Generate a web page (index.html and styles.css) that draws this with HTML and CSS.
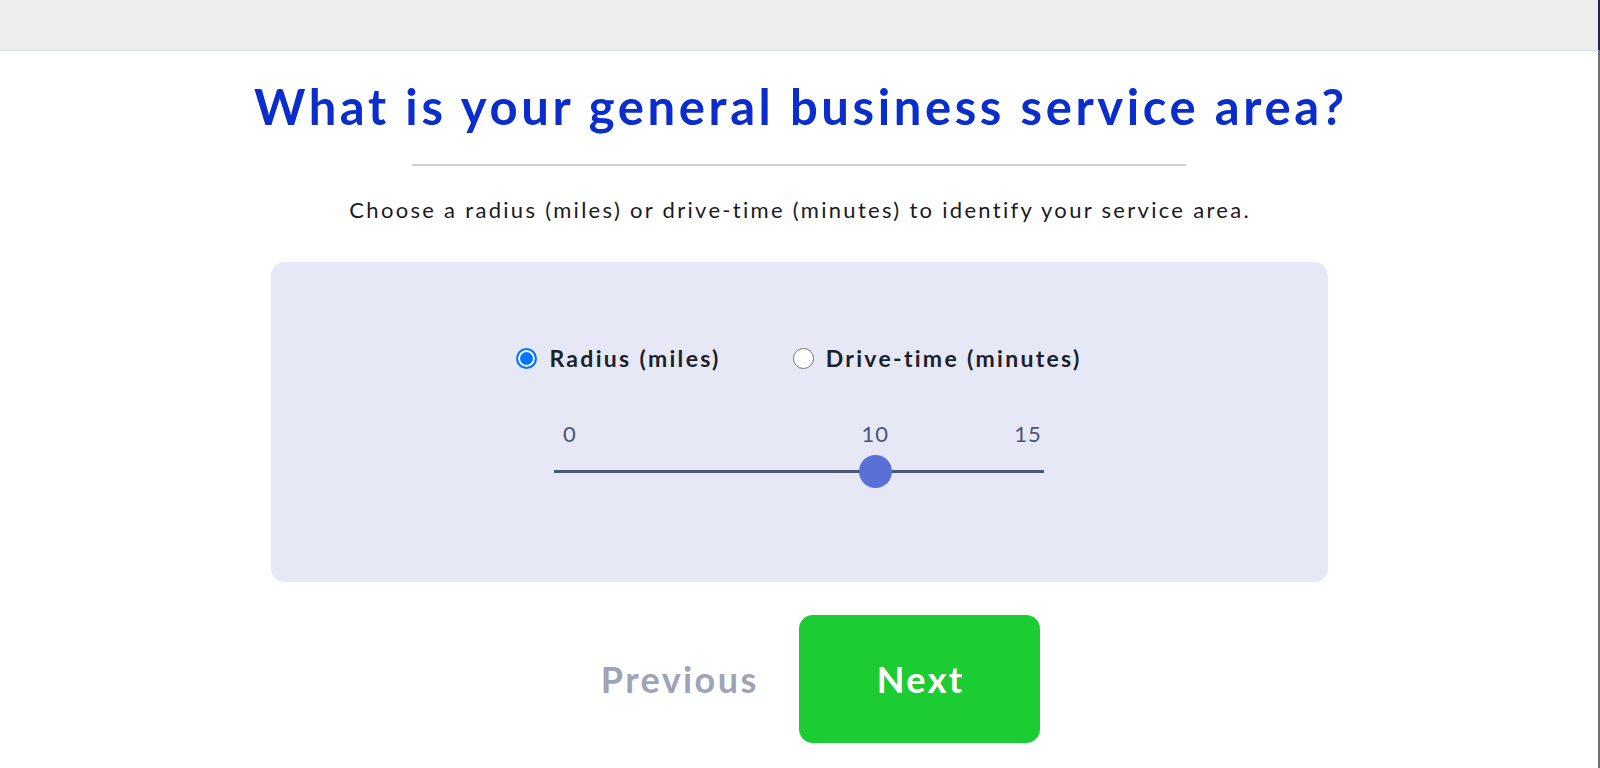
FILE: index.html
```html
<!DOCTYPE html>
<html lang="en">
<head>
    <meta charset="UTF-8">
    <meta name="viewport" content="width=device-width, initial-scale=1.0">
    <title>Service area</title>

    <link rel="stylesheet" href="styles.css">

</head>
<body>

    <div class="topbar"></div>

    <div class="page">

        <h1 class="title">What is your general business service area?</h1>
        <hr class="divider">

        <p class="intro">Choose a radius (miles) or drive-time (minutes) to identify your service area.</p>

        <div class="panel">

            <div class="modes">
                <label class="mode">
                    <input type="radio" name="mode" value="radius" checked>
                    <span>Radius (miles)</span>
                </label>
                <label class="mode">
                    <input type="radio" name="mode" value="drive">
                    <span>Drive-time (minutes)</span>
                </label>
            </div>

            <div class="slider">
                <div class="ticks">
                    <span style="left: 0%;">0</span>
                    <span style="left: 66.667%;">10</span>
                    <span style="left: 100%;">15</span>
                </div>
                <input type="range" id="dist" min="0" max="15" value="10">
            </div>

        </div>

        <div class="actions">
            <button class="btn btn-prev">Previous</button>
            <button class="btn btn-next">Next</button>
        </div>

    </div>

</body>
</html>
```

FILE: styles.css
```css
* {
    box-sizing: border-box;
}

html, body {
    margin: 0;
    height: 100%;
}

body {
    font-family: Lato, "Liberation Sans", sans-serif;
    background: #fff;
    color: #1b1b1f;
    display: flex;
    flex-direction: column;
}

.topbar {
    height: 51px;
    flex: none;
    background: #ededed;
    border-bottom: 1px solid #d8dfe8;
    border-right: 2px solid #1d2260;
}

.page {
    flex: 1;
    border-right: 2px solid #707070;
    display: flex;
    flex-direction: column;
    align-items: center;
}

.title {
    margin: 26px 0 0;
    padding-left: 3.6px;
    font-size: 49px;
    line-height: 1.2;
    font-weight: 700;
    color: #0a2dcb;
    letter-spacing: 3.6px;
}

.divider {
    width: 774px;
    height: 2px;
    margin: 28px 0 0;
    border: 0;
    background: #cfcfcf;
}

.intro {
    margin: 31px 0 0;
    padding-left: 2.3px;
    font-size: 22px;
    line-height: 1.2;
    letter-spacing: 2.3px;
    color: #1a1a1f;
}

.panel {
    width: 1057px;
    height: 320px;
    margin-top: 39px;
    padding-top: 82px;
    background: #e6e8f5;
    border-radius: 14px;
}

.modes {
    display: flex;
    justify-content: center;
    gap: 72px;
    height: 28px;
}

.mode {
    display: flex;
    align-items: center;
    gap: 12px;
    font-size: 23px;
    font-weight: 700;
    letter-spacing: 2.3px;
    color: #1c1f2c;
}

.mode input {
    appearance: none;
    margin: 0;
    width: 21px;
    height: 21px;
    border-radius: 50%;
    border: 1px solid #767676;
    background: #fff;
}

.mode input:checked {
    border: 2px solid #0b74ff;
    box-shadow: inset 0 0 0 2px #fff;
    background: #0b74ff;
}

.slider {
    width: 490px;
    margin: 49px auto 0;
}

.ticks {
    position: relative;
    height: 26px;
    margin: 0 16px 8px;
    font-size: 22px;
    line-height: 26px;
    letter-spacing: 1px;
    color: #4b5675;
}

.ticks span {
    position: absolute;
    top: 0;
    transform: translateX(-50%);
}

#dist {
    appearance: none;
    display: block;
    width: 490px;
    height: 33px;
    margin: 0;
    background: transparent;
}

#dist::-webkit-slider-runnable-track {
    height: 3px;
    background: #4b5675;
}

#dist::-webkit-slider-thumb {
    appearance: none;
    width: 33px;
    height: 33px;
    margin-top: -15px;
    border-radius: 50%;
    background: #5a70d6;
}

.actions {
    display: flex;
    margin-top: 33px;
}

.btn {
    width: 241px;
    height: 128px;
    padding: 0 0 0 2.4px;
    border: 0;
    border-radius: 14px;
    font-family: inherit;
    font-size: 36px;
    font-weight: 700;
    letter-spacing: 2.4px;
    background: transparent;
    cursor: pointer;
}

.btn-prev {
    color: #9ea3b8;
}

.btn-next {
    background: #1bcc32;
    color: #fff;
}
```
